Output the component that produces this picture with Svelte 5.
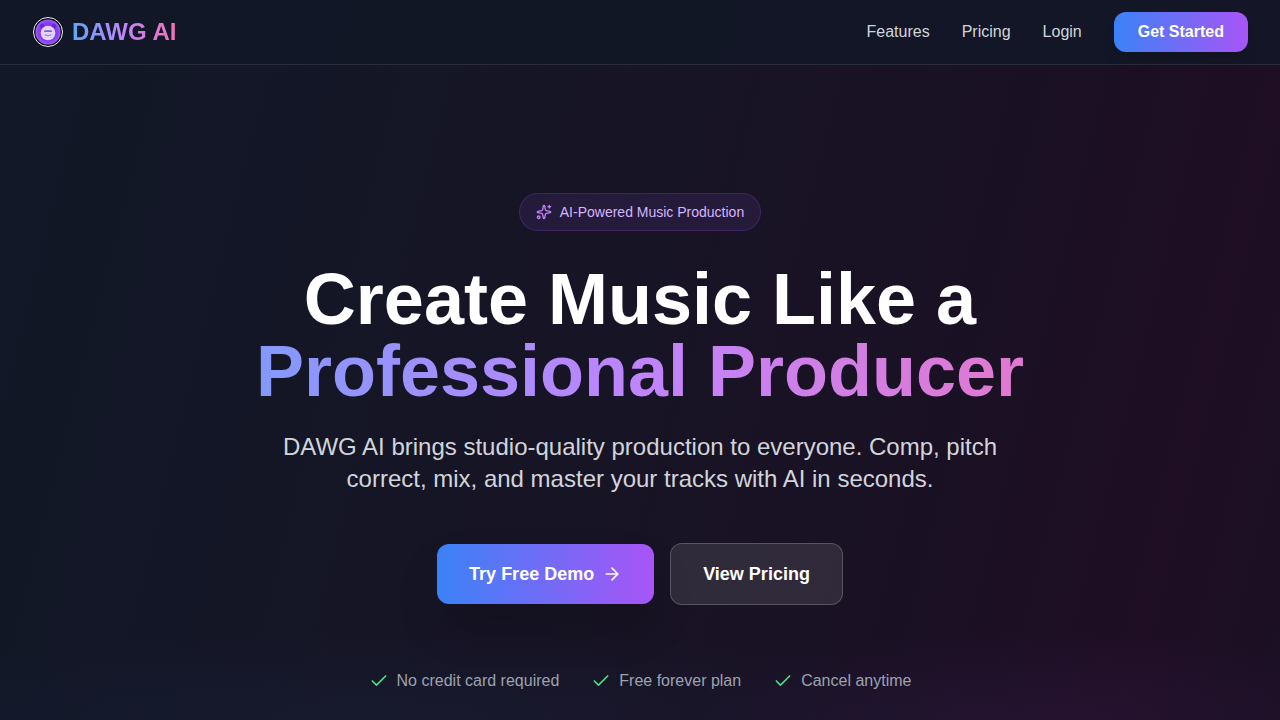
<script>
  const links = [
    { label: 'Features', href: '#features' },
    { label: 'Pricing', href: '#pricing' },
    { label: 'Login', href: '#login' }
  ];
  const perks = ['No credit card required', 'Free forever plan', 'Cancel anytime'];
</script>

<div class="page">
  <header>
    <a class="brand" href="#top">
      <svg width="32" height="32" viewBox="0 0 32 32" aria-hidden="true">
        <defs>
          <radialGradient id="disc">
            <stop offset="0" stop-color="#7c3aed" />
            <stop offset="0.75" stop-color="#8540ef" />
            <stop offset="1" stop-color="#a35cf8" />
          </radialGradient>
        </defs>
        <circle cx="16" cy="16" r="14.5" fill="#07060d" stroke="#f4f4f6" />
        <circle cx="16" cy="16" r="12.6" fill="url(#disc)" />
        <circle cx="10.2" cy="10.2" r="2.4" fill="#6d28d9" />
        <circle cx="21.8" cy="10.2" r="2.4" fill="#6d28d9" />
        <circle cx="16" cy="17" r="7.3" fill="#e4d4fd" />
        <rect x="12" y="14.2" width="8" height="1.9" rx="0.9" fill="#7a6cb0" />
        <rect x="15" y="14.4" width="2" height="1.5" fill="#8b5cf6" />
        <path d="M13 18.8q3 2.4 6 0" fill="none" stroke="#9b6ae8" stroke-width="1" stroke-linecap="round" />
      </svg>
      <span>DAWG AI</span>
    </a>
    <nav>
      {#each links as link}
        <a href={link.href}>{link.label}</a>
      {/each}
      <button type="button" class="start">Get Started</button>
    </nav>
  </header>

  <main>
    <div class="badge">
      <svg class="icon" width="16" height="16" viewBox="0 0 24 24" aria-hidden="true">
        <path d="M11.017 2.814a1 1 0 0 1 1.966 0l1.051 5.558a2 2 0 0 0 1.594 1.594l5.558 1.051a1 1 0 0 1 0 1.966l-5.558 1.051a2 2 0 0 0-1.594 1.594l-1.051 5.558a1 1 0 0 1-1.966 0l-1.051-5.558a2 2 0 0 0-1.594-1.594l-5.558-1.051a1 1 0 0 1 0-1.966l5.558-1.051a2 2 0 0 0 1.594-1.594z" />
        <path d="M20 2v4M22 4h-4" />
        <circle cx="4" cy="20" r="2" />
      </svg>
      <span>AI-Powered Music Production</span>
    </div>
    <h1>Create Music Like a <span>Professional Producer</span></h1>
    <p>DAWG AI brings studio-quality production to everyone. Comp, pitch correct, mix, and master your tracks with AI in seconds.</p>
    <div class="actions">
      <button type="button" class="primary">
        Try Free Demo
        <svg class="icon" width="20" height="20" viewBox="0 0 24 24" aria-hidden="true"><path d="M5 12h14M12 5l7 7-7 7" /></svg>
      </button>
      <button type="button" class="secondary">View Pricing</button>
    </div>
    <ul>
      {#each perks as perk}
        <li>
          <svg class="icon" width="20" height="20" viewBox="0 0 24 24" aria-hidden="true"><path d="M20 6 9 17l-5-5" /></svg>
          {perk}
        </li>
      {/each}
    </ul>
  </main>
</div>

<style>
  :global(body) {
    margin: 0;
    background: #111827;
  }
  .page {
    box-sizing: border-box;
    height: 100vh;
    overflow: hidden;
    color: #fff;
    font-family: "Liberation Sans", Arial, sans-serif;
    font-size: 16px;
    line-height: 24px;
    background:
      radial-gradient(ellipse 640px 90px at 32% 100%, rgba(59, 130, 246, 0.04), transparent),
      radial-gradient(ellipse 360px 90px at 82% 100%, rgba(168, 85, 247, 0.05), transparent),
      linear-gradient(104deg, #111827 0%, #171425 50%, #1b1024 75%, #1f0e24 89%, #1b1024 100%);
  }
  a {
    color: inherit;
    text-decoration: none;
  }
  button {
    border: 0;
    border-radius: 12px;
    color: #fff;
    font: inherit;
    font-weight: 700;
    cursor: pointer;
  }
  .icon {
    flex: none;
    fill: none;
    stroke: currentColor;
    stroke-width: 2;
    stroke-linecap: round;
    stroke-linejoin: round;
  }
  header {
    display: flex;
    align-items: center;
    justify-content: space-between;
    padding: 12px 32px;
    border-bottom: 1px solid rgba(255, 255, 255, 0.1);
    background: rgba(17, 24, 39, 0.8);
  }
  .brand {
    display: flex;
    align-items: center;
    gap: 8px;
    font-size: 24px;
    line-height: 32px;
    font-weight: 700;
  }
  .brand span,
  h1 span {
    background: linear-gradient(to right, #60a5fa, #c084fc, #f472b6);
    background-clip: text;
    -webkit-background-clip: text;
    color: transparent;
  }
  nav {
    display: flex;
    align-items: center;
    gap: 32px;
    color: #d1d5db;
  }
  .start,
  .primary {
    background: linear-gradient(to right, #3b82f6, #a855f7);
  }
  .start {
    padding: 8px 24px;
    box-shadow: 0 10px 15px -3px rgba(0, 0, 0, 0.1), 0 4px 6px -4px rgba(0, 0, 0, 0.1);
  }
  main {
    display: flex;
    flex-direction: column;
    align-items: center;
    padding: 128px 32px;
    text-align: center;
  }
  .badge {
    display: flex;
    align-items: center;
    gap: 8px;
    padding: 8px 16px;
    border: 1px solid rgba(168, 85, 247, 0.2);
    border-radius: 20px;
    background: rgba(168, 85, 247, 0.1);
    color: #d8b4fe;
    font-size: 14px;
    line-height: 20px;
  }
  .badge .icon {
    color: #c084fc;
  }
  h1 {
    align-self: stretch;
    margin: 32px 0 24px;
    font-size: 72px;
    line-height: 72px;
    font-weight: 700;
  }
  h1 span {
    display: block;
  }
  p {
    max-width: 768px;
    margin: 0 0 48px;
    color: #d1d5db;
    font-size: 24px;
    line-height: 32px;
  }
  .actions {
    display: flex;
    align-items: center;
    gap: 16px;
    margin-bottom: 64px;
  }
  .actions button {
    display: flex;
    align-items: center;
    gap: 8px;
    padding: 16px 32px;
    font-size: 18px;
    line-height: 28px;
  }
  .primary {
    box-shadow: 0 25px 50px -12px rgba(0, 0, 0, 0.25);
  }
  .actions .secondary {
    border: 1px solid rgba(255, 255, 255, 0.2);
    background: rgba(255, 255, 255, 0.1);
  }
  ul {
    display: flex;
    flex-wrap: wrap;
    justify-content: center;
    gap: 32px;
    margin: 0;
    padding: 0;
    list-style: none;
    color: #9ca3af;
  }
  li {
    display: flex;
    align-items: center;
    gap: 8px;
  }
  li .icon {
    color: #4ade80;
  }
</style>
